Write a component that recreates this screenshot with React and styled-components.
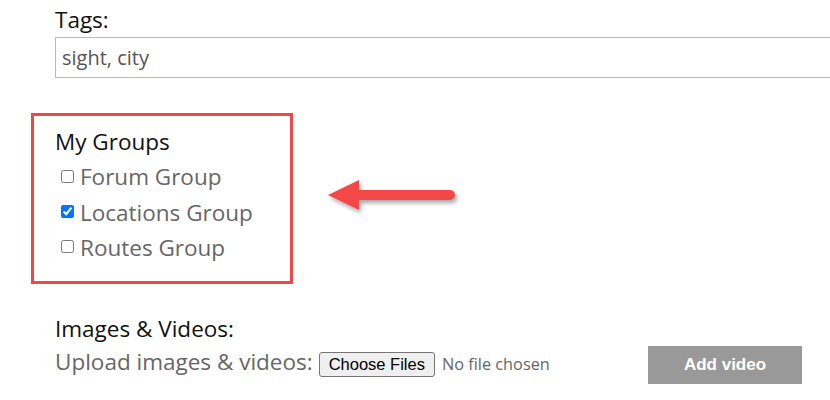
import React from "react";
import styled, { createGlobalStyle } from "styled-components";

const GlobalStyle = createGlobalStyle`
  html, body {
    margin: 0;
    padding: 0;
    background: #fff;
  }
  body {
    font-family: "Open Sans", "Liberation Sans", sans-serif;
    overflow: hidden;
  }
`;

const groups = [
  { id: "forum", label: "Forum Group", checked: false },
  { id: "locations", label: "Locations Group", checked: true },
  { id: "routes", label: "Routes Group", checked: false },
];

export default function App() {
  return (
    <>
      <GlobalStyle />
      <Form>
        <Field>
          <Label>Tags:</Label>
          <TextInput defaultValue="sight, city" />
        </Field>

        <GroupRow>
          <GroupBox>
            <Label>My Groups</Label>
            {groups.map((g) => (
              <CheckRow key={g.id}>
                <input type="checkbox" defaultChecked={g.checked} />
                {g.label}
              </CheckRow>
            ))}
          </GroupBox>
          <Arrow />
        </GroupRow>

        <Media>
          <Label>Images &amp; Videos:</Label>
          <UploadRow>
            <Muted>Upload images &amp; videos:</Muted>
            <FileButton type="button">Choose Files</FileButton>
            <FileHint>No file chosen</FileHint>
            <AddButton type="button">Add video</AddButton>
          </UploadRow>
        </Media>
      </Form>
    </>
  );
}

const Arrow = () => (
  <ArrowSvg width="140" height="50" viewBox="0 0 140 50" aria-hidden>
    <defs>
      <filter id="arrowShadow" x="-10%" y="-30%" width="130%" height="170%">
        <feDropShadow dx="2" dy="3" stdDeviation="2" floodColor="#000" floodOpacity="0.35" />
      </filter>
    </defs>
    <g filter="url(#arrowShadow)" fill="#f44646">
      <polygon points="5,21 36,6 36,36" />
      <rect x="34" y="16" width="93" height="10" />
      <circle cx="127" cy="21" r="5" />
    </g>
  </ArrowSvg>
);

/* ===== styles ===== */
const Form = styled.div`
  width: 830px;
  height: 400px;
  overflow: hidden;
  padding: 2px 0 0 31px;
  box-sizing: border-box;
`;

const Field = styled.div`
  padding-left: 24px;
`;

const Label = styled.div`
  font-size: 22.5px;
  line-height: 35.2px;
  color: #111;
`;

const TextInput = styled.input`
  display: block;
  width: 800px;
  height: 41px;
  box-sizing: border-box;
  border: 1px solid #bbb;
  padding: 0 6px 1px;
  font-family: inherit;
  font-size: 20px;
  color: #555;
  outline: none;
`;

const GroupRow = styled.div`
  display: flex;
  align-items: center;
  gap: 30px;
  margin-top: 35px;
`;

const GroupBox = styled.div`
  width: 262px;
  box-sizing: border-box;
  border: 3px solid #f44646;
  padding: 8px 0 16px 21px;
`;

const CheckRow = styled.label`
  display: flex;
  align-items: center;
  font-size: 22.5px;
  line-height: 35.2px;
  color: #666;

  input {
    width: 13px;
    height: 13px;
    margin: -2px 6px 0 6px;
  }
`;

const ArrowSvg = styled.svg`
  display: block;
  flex: none;
`;

const Media = styled.div`
  padding-left: 24px;
  margin-top: 27px;
`;

const UploadRow = styled.div`
  display: flex;
  align-items: baseline;
`;

const Muted = styled.span`
  font-size: 22.5px;
  line-height: 30px;
  color: #666;
`;

const FileButton = styled.button`
  margin-left: 6px;
  height: 25px;
  padding: 0 9px;
  font-family: "Liberation Sans", Arial, sans-serif;
  font-size: 16.5px;
  color: #000;
  background: #efefef;
  border: 1px solid #767676;
  border-radius: 3px;
`;

const FileHint = styled.span`
  margin-left: 7px;
  font-size: 16.3px;
  color: #666;
`;

const AddButton = styled.button`
  margin-left: auto;
  margin-right: 28px;
  width: 154px;
  height: 38px;
  border: 0;
  background: #999;
  color: #fff;
  font-family: "Liberation Sans", Arial, sans-serif;
  font-weight: 700;
  font-size: 17px;
`;
